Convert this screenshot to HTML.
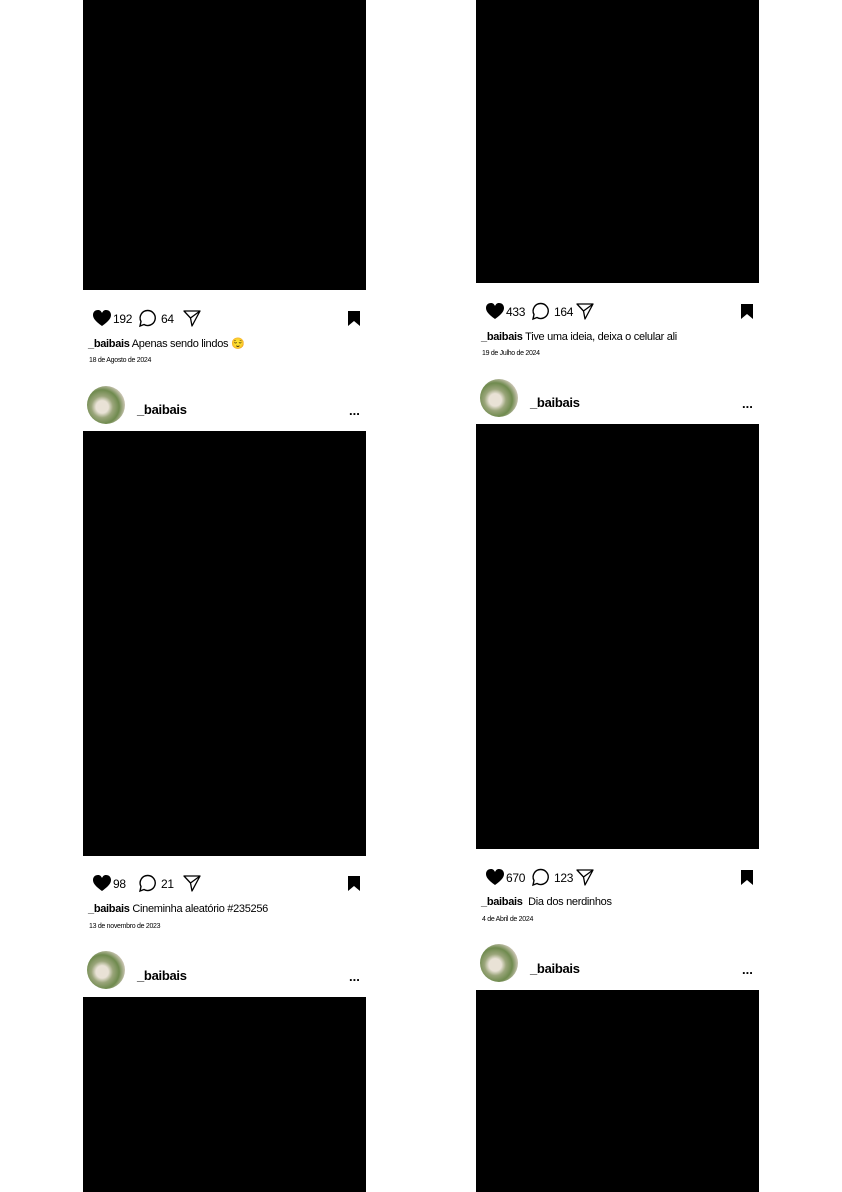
<!DOCTYPE html>
<html><head><meta charset="utf-8"><style>
body{margin:0;width:842px;height:1192px;background:#fff;position:relative;overflow:hidden;font-family:"Liberation Sans",sans-serif;color:#000}
.blk{position:absolute;background:#000}
.a{position:absolute}
.cnt{font-size:12px;letter-spacing:-0.3px}
.cap{font-size:11px;letter-spacing:-0.3px;white-space:nowrap}
.cap b{font-weight:bold}
.date{font-size:7px;letter-spacing:-0.3px;white-space:nowrap}
.av{width:38px;height:38px;border-radius:50%;background:radial-gradient(circle at 40% 55%,#e9e2d6 0 20%,#9aa57a 35%,#6f8a4e 55%,#cfc8b8 75%,#e6e1d8 100%)}
.name{font-size:13px;font-weight:bold;letter-spacing:-0.3px}
.dots{font-size:13px;font-weight:bold}
</style></head><body>
<div class="blk" style="left:83px;top:0;width:283px;height:290px"></div>
<div class="blk" style="left:476px;top:0;width:283px;height:283px"></div>
<div class="blk" style="left:83px;top:431px;width:283px;height:425px"></div>
<div class="blk" style="left:476px;top:424px;width:283px;height:425px"></div>
<div class="blk" style="left:83px;top:997px;width:283px;height:195px"></div>
<div class="blk" style="left:476px;top:990px;width:283px;height:202px"></div>

<svg width="0" height="0" style="position:absolute"><defs>
<g id="heart"><path d="M10 17 C3 12 1 9 1 6 C1 3 3 1 6 1 C8 1 9 2 10 4 C11 2 12 1 14 1 C17 1 19 3 19 6 C19 9 17 12 10 17Z" fill="#000"/></g>
<g id="bub"><path d="M10 1.5 A7.5 7.5 0 1 1 6 15.5 L2 17 L3 12.5 A7.5 7.5 0 0 1 10 1.5Z" fill="none" stroke="#000" stroke-width="1.4"/></g>
<g id="send"><path d="M1 2 L17 2 L9 17 L7.5 9 Z M7.5 9 L17 2" fill="none" stroke="#000" stroke-width="1.3" stroke-linejoin="round"/></g>
<g id="bm"><path d="M1 1 H13 V16 L7 11 L1 16Z" fill="#000"/></g>
</defs></svg>

<svg class="a" style="left:92px;top:309px" width="20" height="18"><use href="#heart"/></svg>
<div class="a cnt" style="left:113px;top:312px">192</div>
<svg class="a" style="left:138px;top:309px" width="19" height="19"><use href="#bub"/></svg>
<div class="a cnt" style="left:161px;top:312px">64</div>
<svg class="a" style="left:183px;top:309px" width="18" height="18"><use href="#send"/></svg>
<svg class="a" style="left:347px;top:310px" width="14" height="17"><use href="#bm"/></svg>
<div class="a cap" style="left:88px;top:337px"><b>_baibais</b> Apenas sendo lindos 😌</div>
<div class="a date" style="left:89px;top:357px">18 de Agosto de 2024</div>
<div class="a av" style="left:87px;top:386px"></div>
<div class="a name" style="left:137px;top:402px">_baibais</div>
<div class="a dots" style="left:349px;top:403px">...</div>

<svg class="a" style="left:485px;top:302px" width="20" height="18"><use href="#heart"/></svg>
<div class="a cnt" style="left:506px;top:305px">433</div>
<svg class="a" style="left:531px;top:302px" width="19" height="19"><use href="#bub"/></svg>
<div class="a cnt" style="left:554px;top:305px">164</div>
<svg class="a" style="left:576px;top:302px" width="18" height="18"><use href="#send"/></svg>
<svg class="a" style="left:740px;top:303px" width="14" height="17"><use href="#bm"/></svg>
<div class="a cap" style="left:481px;top:331px"><b>_baibais</b> Tive uma ideia, deixa o celular ali</div>
<div class="a date" style="left:482px;top:350px">19 de Julho de 2024</div>
<div class="a av" style="left:480px;top:379px"></div>
<div class="a name" style="left:530px;top:395px">_baibais</div>
<div class="a dots" style="left:742px;top:396px">...</div>

<svg class="a" style="left:92px;top:874px" width="20" height="18"><use href="#heart"/></svg>
<div class="a cnt" style="left:113px;top:877px">98</div>
<svg class="a" style="left:138px;top:874px" width="19" height="19"><use href="#bub"/></svg>
<div class="a cnt" style="left:161px;top:877px">21</div>
<svg class="a" style="left:183px;top:874px" width="18" height="18"><use href="#send"/></svg>
<svg class="a" style="left:347px;top:875px" width="14" height="17"><use href="#bm"/></svg>
<div class="a cap" style="left:88px;top:903px"><b>_baibais</b> Cineminha aleatório #235256</div>
<div class="a date" style="left:89px;top:923px">13 de novembro de 2023</div>
<div class="a av" style="left:87px;top:951px"></div>
<div class="a name" style="left:137px;top:968px">_baibais</div>
<div class="a dots" style="left:349px;top:969px">...</div>

<svg class="a" style="left:485px;top:868px" width="20" height="18"><use href="#heart"/></svg>
<div class="a cnt" style="left:506px;top:871px">670</div>
<svg class="a" style="left:531px;top:868px" width="19" height="19"><use href="#bub"/></svg>
<div class="a cnt" style="left:554px;top:871px">123</div>
<svg class="a" style="left:576px;top:868px" width="18" height="18"><use href="#send"/></svg>
<svg class="a" style="left:740px;top:869px" width="14" height="17"><use href="#bm"/></svg>
<div class="a cap" style="left:481px;top:896px"><b>_baibais</b>&nbsp; Dia dos nerdinhos</div>
<div class="a date" style="left:482px;top:916px">4 de Abril de 2024</div>
<div class="a av" style="left:480px;top:944px"></div>
<div class="a name" style="left:530px;top:961px">_baibais</div>
<div class="a dots" style="left:742px;top:962px">...</div>
</body></html>
